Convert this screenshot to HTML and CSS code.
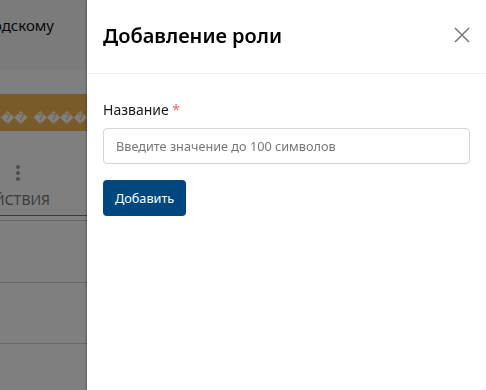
FILE: index.html
```html
<!DOCTYPE html>
<html lang="ru">
<head>
<meta charset="utf-8">
<title>Добавление роли</title>
<link rel="stylesheet" href="styles.css">
</head>
<body>
<div class="page">
  <div class="topbar">
    <div class="crumb"><span>Инструкция по городскому</span></div>
  </div>
  <div class="strip"></div>
  <div class="banner"><span>&#xFFFD;&#xFFFD;&#xFFFD; &#xFFFD;&#xFFFD;&#xFFFD;&#xFFFD;</span></div>
  <div class="thead">
    <div class="dots">
      <span class="dot"></span><span class="dot"></span><span class="dot"></span>
    </div>
    <div class="th"><span>ДЕЙСТВИЯ</span></div>
  </div>
  <div class="row r1"></div>
  <div class="row r2"></div>
  <div class="row r3"></div>
</div>
<div class="mask"></div>
<aside class="drawer">
  <header class="drawer-head">
    <h1 class="title">Добавление роли</h1>
    <button class="close" aria-label="Закрыть">
      <svg width="16" height="16" viewBox="0 0 16 16"><path d="M1 1L15 15M15 1L1 15" stroke="#7a7a7a" stroke-width="1.6" fill="none"/></svg>
    </button>
  </header>
  <div class="drawer-body">
    <label class="label">Название <span class="req">*</span></label>
    <input class="input" type="text" placeholder="Введите значение до 100 символов">
    <button class="btn">Добавить</button>
  </div>
</aside>
</body>
</html>
```
FILE: styles.css
```css
* { box-sizing: border-box; }
html, body { margin: 0; padding: 0; }
body {
  font-family: "Noto Sans", "Open Sans", sans-serif;
  width: 486px;
  height: 390px;
  overflow: hidden;
  background: #fff;
}
.page { width: 486px; height: 390px; background: #fff; }
.topbar { height: 70px; background: #f6f6f6; padding-top: 15px; }
.crumb {
  width: 54px;
  display: flex;
  justify-content: flex-end;
  white-space: nowrap;
  font-size: 15px;
  color: #111;
}
.strip { height: 24px; background: #fff; }
.banner {
  height: 37px;
  background: #f3b655;
  display: flex;
  justify-content: flex-end;
  align-items: center;
  width: 87px;
  white-space: nowrap;
  font-family: "DejaVu Sans", sans-serif;
  font-size: 13px;
  color: #fff;
  word-spacing: 2px;
}
.banner span { padding-top: 12px; }
.thead {
  height: 85px;
  border-bottom: 1px solid #777;
  padding-top: 34px;
}
.dots { width: 36px; display: flex; flex-direction: column; align-items: center; gap: 2px; }
.dot { width: 4px; height: 4px; border-radius: 50%; background: #999; }
.th {
  width: 50px;
  display: flex;
  justify-content: flex-end;
  white-space: nowrap;
  margin-top: 9px;
  font-size: 14px;
  color: #777;
}
.row { border-bottom: 1px solid #d0d0d0; }
.r1 { height: 5px; }
.r2 { height: 62px; }
.r3 { height: 61px; }
.mask {
  position: fixed;
  inset: 0;
  background: rgba(0, 0, 0, 0.5);
}
.drawer {
  position: fixed;
  top: 0;
  right: 0;
  width: 399px;
  height: 390px;
  background: #fff;
  box-shadow: -1px 0 2px rgba(0, 0, 0, 0.25);
}
.drawer-head {
  height: 74px;
  border-bottom: 1px solid #f0f0f0;
  display: flex;
  align-items: center;
  justify-content: space-between;
  padding: 0 16px 3px 16px;
}
.title {
  margin: 0;
  font-size: 20px;
  font-weight: 600;
  color: #000;
}
.close {
  border: 0;
  background: none;
  padding: 0;
  width: 16px;
  height: 16px;
  display: flex;
}
.drawer-body { padding: 26px 16px; display: flex; flex-direction: column; align-items: flex-start; }
.label { font-size: 14px; color: #1a1a1a; margin-bottom: 9px; }
.req { color: #f5655a; }
.input {
  width: 367px;
  height: 36px;
  border: 1px solid #d5d5d5;
  border-radius: 4px;
  padding: 0 12px;
  font-family: inherit;
  font-size: 12.7px;
  color: #333;
  margin-bottom: 16px;
}
.input::placeholder { color: #777; }
.btn {
  height: 36px;
  padding: 0 12px;
  border: 0;
  border-radius: 4px;
  background: #00477f;
  color: #fff;
  font-family: inherit;
  font-size: 12.7px;
}
```
